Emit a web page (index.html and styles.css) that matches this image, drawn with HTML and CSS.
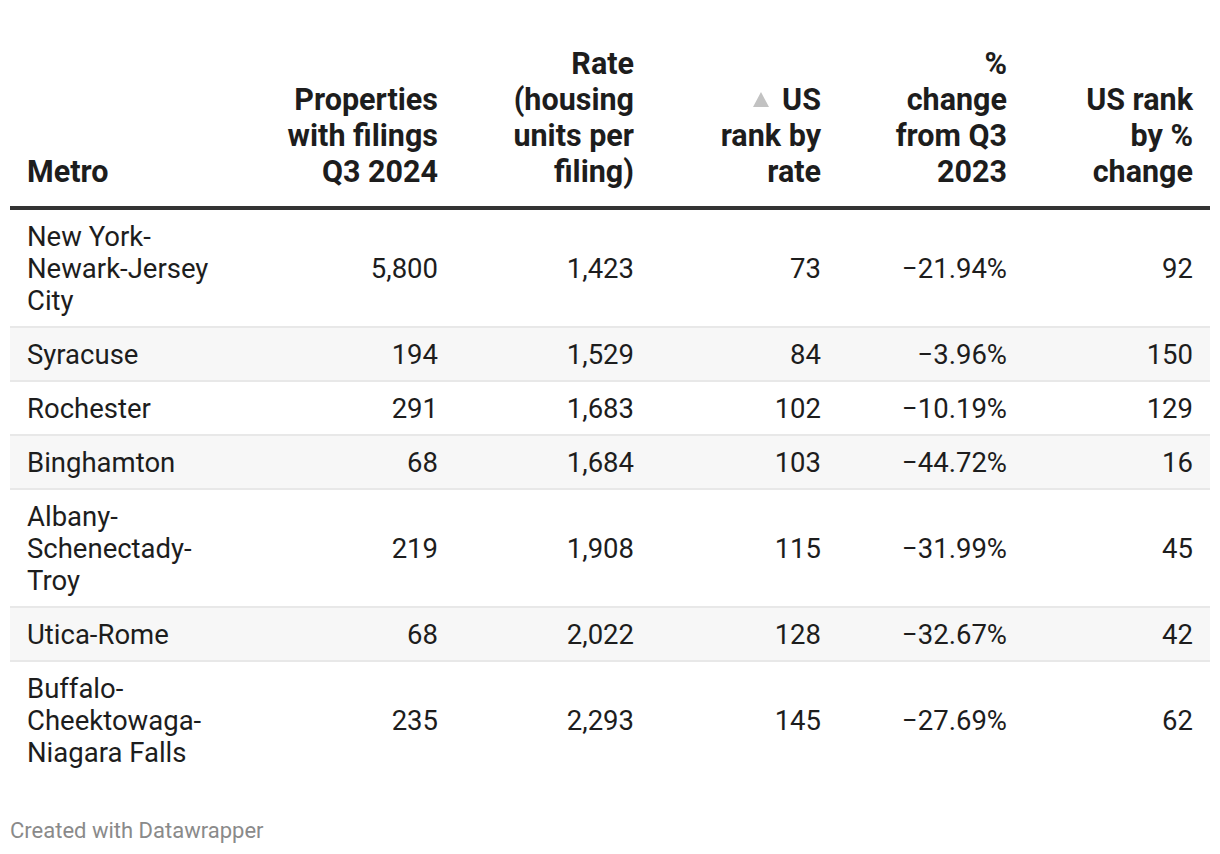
FILE: index.html
```html
<!DOCTYPE html>
<html>
<head>
<meta charset="utf-8">
<link rel="stylesheet" href="styles.css">
</head>
<body>
<div class="chart">
  <table class="data">
    <colgroup>
      <col class="c-metro">
      <col class="c-props">
      <col class="c-rate">
      <col class="c-rank">
      <col class="c-chg">
      <col class="c-rankchg">
    </colgroup>
    <thead>
      <tr>
        <th class="left">Metro</th>
        <th>Properties with filings Q3 2024</th>
        <th>Rate (housing units per filing)</th>
        <th><svg class="sort" width="16" height="15" viewBox="0 0 16 15"><polygon points="8,0 16,15 0,15" fill="#c2c2c2"/></svg>US rank by rate</th>
        <th>% change from Q3 2023</th>
        <th>US rank by % change</th>
      </tr>
    </thead>
    <tbody>
      <tr>
        <td class="left">New York-Newark-Jersey City</td>
        <td>5,800</td><td>1,423</td><td>73</td><td>−21.94%</td><td>92</td>
      </tr>
      <tr class="alt">
        <td class="left">Syracuse</td>
        <td>194</td><td>1,529</td><td>84</td><td>−3.96%</td><td>150</td>
      </tr>
      <tr>
        <td class="left">Rochester</td>
        <td>291</td><td>1,683</td><td>102</td><td>−10.19%</td><td>129</td>
      </tr>
      <tr class="alt">
        <td class="left">Binghamton</td>
        <td>68</td><td>1,684</td><td>103</td><td>−44.72%</td><td>16</td>
      </tr>
      <tr>
        <td class="left">Albany-Schenectady-Troy</td>
        <td>219</td><td>1,908</td><td>115</td><td>−31.99%</td><td>45</td>
      </tr>
      <tr class="alt">
        <td class="left">Utica-Rome</td>
        <td>68</td><td>2,022</td><td>128</td><td>−32.67%</td><td>42</td>
      </tr>
      <tr class="last">
        <td class="left">Buffalo-Cheektowaga-Niagara Falls</td>
        <td>235</td><td>2,293</td><td>145</td><td>−27.69%</td><td>62</td>
      </tr>
    </tbody>
  </table>
  <div class="footer">Created with Datawrapper</div>
</div>
</body>
</html>
```
FILE: styles.css
```css
html, body {
  margin: 0;
  padding: 0;
  background: #ffffff;
}
body {
  font-family: Roboto, "Liberation Sans", sans-serif;
  color: #1d1d1d;
}
.chart {
  padding: 36px 10px 0 10px;
}
.data {
  width: 1200px;
  border-collapse: collapse;
  table-layout: fixed;
}
.c-metro { width: 227px; }
.c-props { width: 218px; }
.c-rate { width: 196px; }
.c-rank { width: 187px; }
.c-chg { width: 186px; }
.c-rankchg { width: 186px; }

.data th {
  font-size: 30.5px;
  line-height: 36px;
  font-weight: 700;
  text-align: right;
  vertical-align: bottom;
  padding: 10px 17px 16px 45px;
  border-bottom: 4px solid #333333;
  color: #1d1d1d;
}
.data th.left {
  padding-left: 17px;
}
.data th.left, .data td.left {
  text-align: left;
}
.sort {
  display: inline-block;
  vertical-align: 3px;
  margin-right: 13px;
}
.data td {
  font-size: 27.5px;
  line-height: 32px;
  text-align: right;
  vertical-align: middle;
  padding: 11px 17px 9px 17px;
  border-bottom: 2px solid #e8e8e8;
}
.data tr.alt td {
  background: #f7f7f7;
}
.data tr.last td {
  border-bottom: none;
}
.footer {
  margin-top: 41px;
  font-size: 22px;
  line-height: 24px;
  color: #8a8a8a;
}
```
